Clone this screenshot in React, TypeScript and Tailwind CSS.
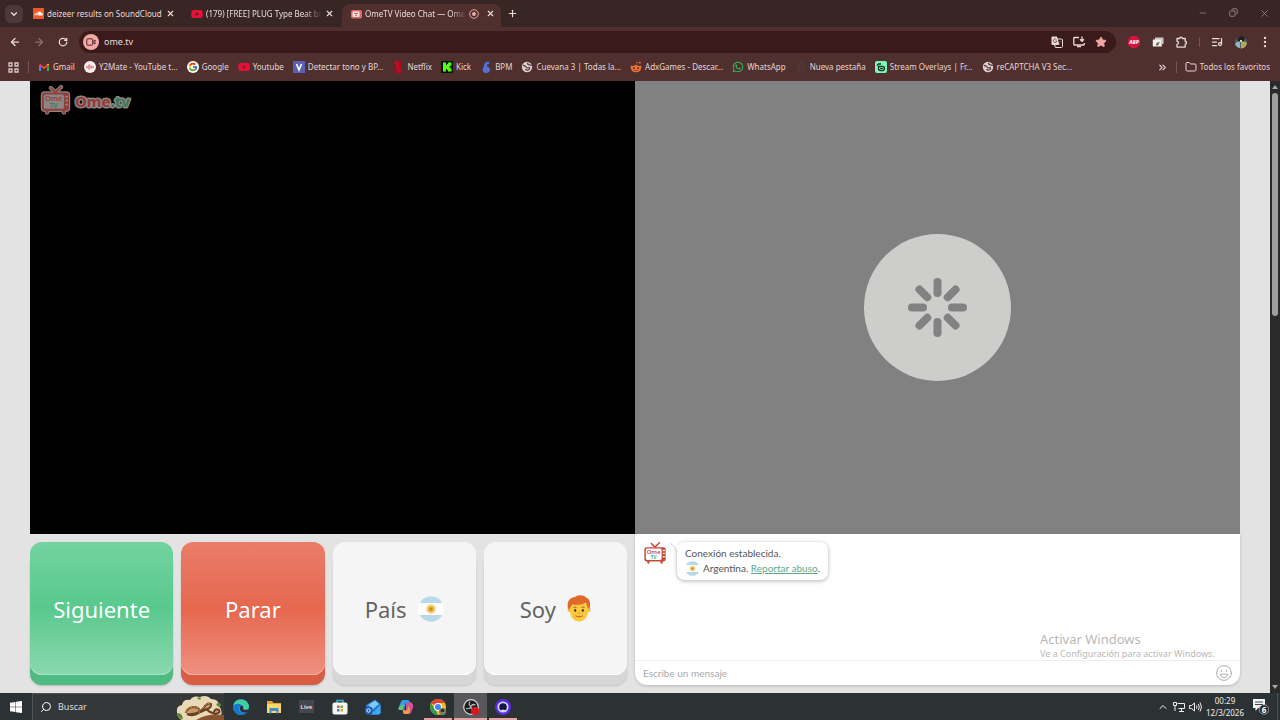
import type { ReactNode } from "react"
import {
  ArrowLeft,
  ArrowRight,
  ChevronDown,
  ChevronsRight,
  ChevronUp,
  Copy,
  EllipsisVertical,
  Folder,
  Globe,
  ListMusic,
  Minus,
  Plus,
  RotateCw,
  Search,
  Star,
  X,
} from "lucide-react"
import { FaRedditAlien, FaSoundcloud, FaWhatsapp, FaYoutube } from "react-icons/fa"
import { FcGoogle } from "react-icons/fc"

function TvIcon({ className, red, green, fill, outline }: { className: string; red: string; green: string; fill: string; outline?: string }) {
  return (
    <svg viewBox="0 0 32 30" className={className} aria-hidden="true">
      {outline && (
        <g stroke={outline} fill={outline} strokeLinecap="round">
          <path d="M11 2l5 5 6-6" fill="none" strokeWidth="4.500" />
          <path d="M7 26v2.200M25 26v2.200" strokeWidth="5" />
          <rect x="1.500" y="7" width="29" height="19.500" rx="3" strokeWidth="2.500" />
        </g>
      )}
      <path d="M11 2l5 5 6-6" fill="none" stroke={red} strokeWidth="2" strokeLinecap="round" />
      <path d="M7 26v2.200M25 26v2.200" stroke={red} strokeWidth="3" strokeLinecap="round" />
      <rect x="1.500" y="7" width="29" height="19.500" rx="3" fill={red} />
      <rect x="3.500" y="9" width="21.500" height="15.500" rx="2" fill={fill} />
      <path d="M27.500 11.500h1M27.500 15.500h1M27.500 20h1" stroke={fill} strokeWidth="2" strokeLinecap="round" />
      <text x="14" y="16.500" textAnchor="middle" fontSize="8" fontFamily="Noto Sans, sans-serif" fontWeight="600" fill={red}>
        Ome
      </text>
      <text x="14" y="23.500" textAnchor="middle" fontSize="7" fontFamily="Noto Sans, sans-serif" fontWeight="700" fill={green}>
        TV
      </text>
    </svg>
  )
}

function OmeLogo() {
  return (
    <div className="absolute left-[10px] top-[5px] flex items-center gap-[2px]">
      <TvIcon className="h-7 w-[31px] overflow-visible" red="#8f3f3a" green="#3f7d66" fill="#8d8583" outline="#8d8583" />
      <svg viewBox="0 0 58 22" className="mt-[2px] h-[22px] w-[58px] overflow-visible" aria-label="Ome.tv">
        <text
          x="2"
          y="17"
          fontSize="15"
          fontFamily="Noto Sans, sans-serif"
          fontWeight="700"
          stroke="#8d8583"
          strokeWidth="3"
          strokeLinejoin="round"
          paintOrder="stroke"
          fill="#963a36"
        >
          Ome<tspan fill="#37795c">.tv</tspan>
        </text>
      </svg>
    </div>
  )
}

function Flag({ className }: { className: string }) {
  return (
    <svg viewBox="0 0 26 26" className={className} aria-hidden="true">
      <circle cx="13" cy="13" r="13" fill="#fdfdfd" />
      <path d="M2.200 6A13 13 0 0 1 23.800 6V7H2.200zM2.200 20A13 13 0 0 0 23.800 20V19H2.200z" fill="#b9d8ea" />
      <circle cx="13" cy="13" r="5" fill="#f3dfa0" />
      <circle cx="13" cy="13" r="3.200" fill="#e9b53a" />
      <circle cx="13" cy="13" r="1.500" fill="#c48a2a" />
    </svg>
  )
}

function Boy() {
  return (
    <svg viewBox="0 0 24 27" className="h-[27px] w-6" aria-hidden="true">
      <circle cx="2.500" cy="15" r="2" fill="#f4b92e" />
      <circle cx="21.500" cy="15" r="2" fill="#f4b92e" />
      <path d="M3 9h18v7c0 6-4 10.500-9 10.500S3 22 3 16z" fill="#fcc83c" />
      <path d="M1 14C-.5 6 3 2.500 8 2c3-2.500 9-2 11 .5 4 1.500 5 6 3.500 11.500l-2-1.500c0-2-1-3.500-2-4.500-4 2-9 2-13 1.500-1.500 1-2 2.500-2.500 4z" fill="#e0692a" />
      <path d="M6.500 12.500q1.500-1 3 0M14.500 12.500q1.500-1 3 0" fill="none" stroke="#b5672a" />
      <ellipse cx="8.200" cy="15.500" rx="1.100" ry="1.400" fill="#4b3a2c" />
      <ellipse cx="15.800" cy="15.500" rx="1.100" ry="1.400" fill="#4b3a2c" />
      <path d="M8.500 21q3.500 2 7 0" fill="none" stroke="#b5672a" strokeLinecap="round" />
      <path d="M11 18h2" stroke="#dd9a2a" strokeLinecap="round" />
    </svg>
  )
}

function Spinner() {
  return (
    <svg viewBox="0 0 147 147" className="size-[147px]" role="img" aria-label="Cargando">
      <circle cx="73.500" cy="73.500" r="73.500" fill="#cdcdcb" />
      {[0, 45, 90, 135, 180, 225, 270, 315].map((angle) => (
        <rect key={angle} x="69.500" y="44" width="8" height="19" rx="4" fill="#828282" transform={`rotate(${angle} 73.5 73.5)`} />
      ))}
    </svg>
  )
}

const youtube = <FaYoutube className="size-3 text-[#e8103a]" />

const tabs: { title: string; icon: ReactNode; faded?: boolean; active?: boolean }[] = [
  {
    title: "deizeer results on SoundCloud",
    icon: (
      <span className="flex size-[11px] items-center justify-center bg-[#f0582a]">
        <FaSoundcloud className="size-[9px] text-white" />
      </span>
    ),
  },
  { title: "(179) [FREE] PLUG Type Beat br", icon: youtube, faded: true },
  {
    title: "OmeTV Video Chat — Ome",
    icon: (
      <svg viewBox="0 0 11 10" className="h-[10px] w-[11px]">
        <rect y="1" width="11" height="8.500" rx="1.500" fill="#e06a62" />
        <rect x="1.500" y="2.500" width="7" height="5.500" rx="1" fill="#f7e4e2" />
        <path d="M3 4.500h4M4 6.300h2" stroke="#c76660" />
      </svg>
    ),
    faded: true,
    active: true,
  },
]

const bookmarks: { title: string; icon: ReactNode }[] = [
  {
    title: "Gmail",
    icon: (
      <svg viewBox="0 0 12 12" className="size-3">
        <path d="M2 10V4" stroke="#4285f4" strokeWidth="2" />
        <path d="M10 10V4" stroke="#34a853" strokeWidth="2" />
        <path d="M1.500 3.500L6 7l4.500-3.500" fill="none" stroke="#ea4335" strokeWidth="2" />
        <path d="M10 4V3" stroke="#fbbc04" strokeWidth="2" />
      </svg>
    ),
  },
  {
    title: "Y2Mate - YouTube t...",
    icon: (
      <svg viewBox="0 0 12 12" className="size-3">
        <circle cx="6" cy="6" r="6" fill="#f8eeee" />
        <path d="M3 5v2M5 3.500v5M7 4.500v3M9 5v2" fill="none" stroke="#c5403e" />
      </svg>
    ),
  },
  { title: "Google", icon: <FcGoogle className="size-3 rounded-full bg-white p-px" /> },
  { title: "Youtube", icon: youtube },
  {
    title: "Detectar tono y BP...",
    icon: (
      <svg viewBox="0 0 12 12" className="size-3">
        <rect width="12" height="12" fill="#5b5fb0" />
        <path d="M3.500 3L6 9l2.500-6" fill="none" stroke="#fff" strokeWidth="1.600" />
      </svg>
    ),
  },
  {
    title: "Netflix",
    icon: (
      <svg viewBox="0 0 12 12" className="size-3">
        <path d="M2.500 0h7v12h-7z" fill="#a50d1b" />
        <path d="M2.500 0h2.500l4.500 12H7z" fill="#c40f20" />
      </svg>
    ),
  },
  {
    title: "Kick",
    icon: (
      <svg viewBox="0 0 12 12" className="size-3">
        <rect width="12" height="12" fill="#0b130b" />
        <path d="M2 1.500h3v2.500h1V3h1V1.500h3.500v3h-1v1h-1v1h1v1h1v3H7V9H6V8H5v2.500H2z" fill="#53fc18" />
      </svg>
    ),
  },
  {
    title: "BPM",
    icon: (
      <svg viewBox="0 0 12 12" className="size-3">
        <path d="M9 .5L5 1.500 3.500 6 2.500 9c0 4 7.500 4 7.500 0 0-2-1.500-3.500-3-3.500L7 3.500l2-.5z" fill="#5470d8" />
      </svg>
    ),
  },
  { title: "Cuevana 3 | Todas la...", icon: <GlobeDot /> },
  { title: "AdxGames - Descar...", icon: <FaRedditAlien className="size-3 text-[#ef7038]" /> },
  { title: "WhatsApp", icon: <FaWhatsapp className="size-3 text-[#2fc05c]" /> },
  { title: "Nueva pestaña", icon: <Globe className="size-[10px] text-[#553a3a]" /> },
  {
    title: "Stream Overlays | Fr...",
    icon: (
      <svg viewBox="0 0 12 12" className="size-3">
        <rect width="12" height="12" rx="2" fill="#80f5b6" />
        <path d="M2 4.500L3.500 3H6M3.500 5.500h4a2 2 0 0 1 0 4h-2a2 2 0 0 1-2-2z" fill="none" stroke="#12392b" strokeWidth="1.300" />
        <path d="M5 7.500h3" stroke="#12392b" />
      </svg>
    ),
  },
  { title: "reCAPTCHA V3 Sec...", icon: <GlobeDot /> },
]

function GlobeDot() {
  return (
    <svg viewBox="0 0 12 12" className="size-3">
      <circle cx="6" cy="6" r="5.200" fill="#dccfce" />
      <path d="M2 4.500q2 0 3 1.500t3 .5q1.500 1-.5 2.200T4.500 8M6.500 1.800q0 2 2 2t2 1.200" fill="none" stroke="#5a4140" strokeWidth="1.300" />
    </svg>
  )
}

function TabStrip() {
  return (
    <header className="flex h-[27px] shrink-0 items-center bg-[#382625] pl-[5px] text-[#eadbd9]">
      <button aria-label="Buscar pestañas" className="flex size-[18px] items-center justify-center rounded-md bg-[#4c3a39]">
        <ChevronDown className="size-[10px]" strokeWidth={3} />
      </button>
      <nav className="flex h-full items-end pl-px">
        {tabs.map((tab) => (
          <div
            key={tab.title}
            className={
              tab.active
                ? "flex h-[23px] w-[159px] items-center gap-[3px] rounded-t-lg bg-[#4f302f] px-2 pb-1"
                : "flex h-[23px] w-[159px] items-center gap-[3px] px-2 pb-1"
            }
          >
            <span className="flex w-3 shrink-0 justify-center">{tab.icon}</span>
            <a
              href="#"
              className={
                tab.faded
                  ? "flex-1 whitespace-nowrap [mask-image:linear-gradient(to_right,black_85%,transparent)]"
                  : "flex-1 whitespace-nowrap"
              }
            >
              {tab.title}
            </a>
            {tab.active && (
              <svg viewBox="0 0 10 10" className="mr-1 size-[10px] shrink-0">
                <circle cx="5" cy="5" r="4.300" fill="none" stroke="#eba9a5" />
                <circle cx="5" cy="5" r="2" fill="#eba9a5" />
              </svg>
            )}
            <button aria-label="Cerrar pestaña" className="shrink-0">
              <X className="size-[9px]" strokeWidth={3} />
            </button>
          </div>
        ))}
      </nav>
      <button aria-label="Nueva pestaña" className="ml-[6px]">
        <Plus className="size-[11px]" strokeWidth={2.5} />
      </button>
      <div className="ml-auto flex text-[#94807f]">
        <button aria-label="Minimizar" className="flex w-[31px] justify-center">
          <Minus className="size-[10px]" />
        </button>
        <button aria-label="Restaurar" className="flex w-[31px] justify-center">
          <Copy className="size-[9px] -scale-x-100" strokeWidth={2.5} />
        </button>
        <button aria-label="Cerrar" className="flex w-[31px] justify-center">
          <X className="size-[11px]" />
        </button>
      </div>
    </header>
  )
}

function Toolbar() {
  return (
    <div className="flex h-[30px] shrink-0 items-center bg-[#4f302f] px-[3px] text-[#eadbd9]">
      <button aria-label="Atrás" className="flex w-6 justify-center">
        <ArrowLeft className="size-3" strokeWidth={2.5} />
      </button>
      <button aria-label="Adelante" className="flex w-6 justify-center text-[#8b706f]">
        <ArrowRight className="size-3" strokeWidth={2.5} />
      </button>
      <button aria-label="Recargar" className="flex w-6 justify-center">
        <RotateCw className="size-[10px]" strokeWidth={3} />
      </button>
      <div className="ml-1 flex h-[22px] flex-1 items-center rounded-full bg-[#3a1a1a] pl-1 pr-[9px]">
        <span className="flex size-4 items-center justify-center rounded-full bg-[#f0a9a5]">
          <svg viewBox="0 0 10 8" className="h-2 w-[10px]" fill="none" stroke="#5b2626">
            <rect x=".8" y=".8" width="5.900" height="6.400" rx=".8" />
            <path d="M7 3.500l2-1.500v4L7 4.500" />
          </svg>
        </span>
        <input aria-label="Dirección" defaultValue="ome.tv" className="min-w-0 flex-1 bg-transparent pl-[5px] text-[9px] outline-none" />
        <button aria-label="Traducir" className="px-[5px]">
          <svg viewBox="0 0 12 12" className="size-3">
            <rect x="4" y="3" width="7.500" height="8.500" rx="1" fill="none" stroke="#eadbd9" />
            <path d="M1.500.5H6L8.500 9h-7Q.5 9 .5 8V1.500Q.5.500 1.500.500z" fill="#eadbd9" />
            <path d="M5.500 3.700A1.800 1.800 0 1 0 5.800 5H4.300M7.500 5.500h3M9 5v.5q0 2-1.500 3" fill="none" stroke="#6a4543" strokeWidth=".8" />
          </svg>
        </button>
        <button aria-label="Instalar" className="px-[5px]">
          <svg viewBox="0 0 12 12" className="size-3" fill="none" stroke="#eadbd9" strokeWidth="1.300">
            <path d="M6 1.500H1.500q-.7 0-.7.700v6q0 .800.700.800h9q.8 0 .8-.8V7M4 10.700h4M9 .5v4.500M7 3.300l2 2 2-2" />
          </svg>
        </button>
        <button aria-label="Favorito" className="pl-[5px] text-[#f2a6a2]">
          <Star className="size-3" fill="currentColor" />
        </button>
      </div>
      <div className="ml-[6px] flex items-center">
        <button aria-label="AdBlock" className="flex w-6 justify-center">
          <svg viewBox="0 0 12 12" className="size-3">
            <path d="M3.500 0h5L12 3.500v5L8.500 12h-5L0 8.500v-5z" fill="#d8123c" />
            <text x="6" y="8" textAnchor="middle" fontSize="5" fontWeight="800" fontStyle="italic" fill="#fff">
              ABP
            </text>
          </svg>
        </button>
        <button aria-label="Capturas" className="flex w-6 justify-center">
          <svg viewBox="0 0 12 12" className="size-3">
            <path d="M3 1.500h8.500V8H10V4H3z" fill="#cfc3c2" />
            <rect x=".8" y="3.500" width="9" height="7" rx=".5" fill="#f5eeee" />
            <path d="M4 9.500c0-3 2-4 4-3-1 .500-1.500 2.500-2 3z" fill="#5d6b5a" />
          </svg>
        </button>
        <button aria-label="Extensiones" className="flex w-6 justify-center">
          <svg viewBox="0 0 12 12" className="size-3" fill="none" stroke="currentColor" strokeWidth="1.300" strokeLinejoin="round">
            <path d="M1 2.500h2.700a1.300 1.300 0 0 1 2.600 0H9.200v3a1.300 1.300 0 0 1 0 2.600v3H1V8.300a1.500 1.500 0 0 0 0-3z" />
          </svg>
        </button>
        <span className="mx-[5px] h-[10px] w-px bg-[#755554]" />
        <button aria-label="Medios" className="flex w-6 justify-center">
          <ListMusic className="size-3" strokeWidth={2.5} />
        </button>
        <button aria-label="Perfil" className="flex w-6 justify-center">
          <svg viewBox="0 0 14 14" className="size-[14px]">
            <circle cx="7" cy="7.500" r="6" fill="#59655a" />
            <path d="M3 4l4-3.500L11 3l-1 3H4z" fill="#1d221d" />
            <path d="M1 9q2-3 5-2v6Q2 12 1 9z" fill="#8fb4cf" />
            <path d="M7 7q4-1 6 1-1 5-6 5.500z" fill="#b3a75b" />
            <path d="M6 5h2v2H6z" fill="#d8cfc6" />
          </svg>
        </button>
        <button aria-label="Menú" className="flex w-6 justify-center">
          <EllipsisVertical className="size-[14px]" strokeWidth={2} />
        </button>
      </div>
    </div>
  )
}

function BookmarksBar() {
  return (
    <nav className="flex h-6 shrink-0 items-center whitespace-nowrap bg-[#4f302f] pb-1 pl-2 pr-[10px] text-[#e5d5d4]">
      <button aria-label="Aplicaciones">
        <svg viewBox="0 0 11 11" className="size-[11px]" fill="none" stroke="#d9c8c7" strokeWidth="1.300">
          <path d="M1 1h3v3H1zM7 1h3v3H7zM1 7h3v3H1zM7 7h3v3H7z" />
        </svg>
      </button>
      <span className="ml-[9px] mr-[9px] h-3 w-px bg-[#755554]" />
      <div className="flex min-w-0 gap-[9px] overflow-hidden">
        {bookmarks.map((item) => (
          <a key={item.title} href="#" className="flex shrink-0 items-center gap-[3px]">
            <span className="flex w-3 justify-center">{item.icon}</span>
            {item.title}
          </a>
        ))}
      </div>
      <button aria-label="Más favoritos" className="ml-auto">
        <ChevronsRight className="size-[11px]" strokeWidth={2.5} />
      </button>
      <span className="mx-2 h-3 w-px bg-[#755554]" />
      <a href="#" className="flex items-center gap-[3px]">
        <Folder className="size-3" />
        Todos los favoritos
      </a>
    </nav>
  )
}

function BigButton({ children, className }: { children: ReactNode; className: string }) {
  return (
    <button className={`mb-[10px] flex min-w-0 items-center justify-center gap-[11px] rounded-xl text-[22px] ${className}`}>
      {children}
    </button>
  )
}

function Chat() {
  return (
    <section className="flex flex-col rounded-b-xl bg-white text-[10px] shadow-[0_1px_3px_rgba(0,0,0,0.2)]">
      <div className="flex flex-1 items-start gap-[10px] px-2 pt-2">
        <TvIcon className="h-[22px] w-6" red="#c64a36" green="#5db088" fill="#ffffff" />
        <div className="relative rounded-lg bg-white px-2 py-1 font-[Lato,sans-serif] leading-[15px] text-[#555] shadow-[0_1px_4px_rgba(0,0,0,0.3)]">
          <svg viewBox="0 0 8 12" className="absolute -left-[7px] top-0 h-3 w-2">
            <path d="M0 1h8v11Q7 5 0 1z" fill="#fff" />
            <path d="M0 1q5 3 7 9" fill="none" stroke="#cfcfcf" />
          </svg>
          <p>Conexión establecida.</p>
          <p className="flex items-center gap-[3px]">
            <Flag className="size-[15px]" />
            <span>
              Argentina.{" "}
              <a href="#" className="text-[#5ea98a] underline">
                Reportar abuso
              </a>
              .
            </span>
          </p>
        </div>
      </div>
      <form className="flex h-[25px] items-center border-t border-[#eee] px-2 font-[Lato,sans-serif]">
        <input
          aria-label="Escribe un mensaje"
          placeholder="Escribe un mensaje"
          className="min-w-0 flex-1 bg-transparent outline-none placeholder:text-[#aaa]"
        />
        <button type="button" aria-label="Emojis">
          <svg viewBox="0 0 16 16" className="size-4" fill="none" stroke="#b0b0b0" strokeLinecap="round">
            <circle cx="8" cy="8" r="7.400" />
            <path d="M4.200 9.500q1 3 3.800 3t3.800-3zM5.500 5.200v1.300M10.500 5.200v1.300" />
          </svg>
        </button>
      </form>
    </section>
  )
}

const apps: { name: string; icon: ReactNode; state?: "running" | "focused" }[] = [
  {
    name: "Edge",
    icon: (
      <svg viewBox="0 0 16 16" className="size-4">
        <circle cx="8" cy="8" r="8" fill="#1e9be0" />
        <path d="M.5 6C2-1 14-1.500 16 7q0 4-5 3.500c-2-.3-1-1.500-1-2.500 0-3-6-4-9.500-2z" fill="#41cf9a" />
        <path d="M.2 7q6-4 8-.500-3 1-2.500 4c.5 3 4 4.500 8 2Q11 16 8 16 .5 15.500.2 7z" fill="#1676cc" />
        <path d="M8.500 6.500q2 0 1.800 2-1 2 2 2.500 2.500 0 3.500-1l-1.500 3q-5 1.500-7-1.500-1.500-3 1.200-5z" fill="#2b2f33" />
      </svg>
    ),
  },
  {
    name: "Explorador",
    icon: (
      <svg viewBox="0 0 16 14" className="h-[14px] w-4">
        <path d="M1 1h5l1.500 2H15v10H1z" fill="#e2a83a" />
        <path d="M1 4h14v9H1z" fill="#fbd668" />
        <path d="M3.500 8h9v5.500h-2V11h-5v2.500h-2z" fill="#3f8fd0" />
      </svg>
    ),
  },
  {
    name: "Ableton Live",
    icon: (
      <svg viewBox="0 0 15 13" className="h-[13px] w-[15px]">
        <rect width="15" height="13" fill="#45454f" />
        <text x="7.500" y="9" textAnchor="middle" fontSize="6" fontWeight="600" fill="#e2e2e2">
          Live
        </text>
      </svg>
    ),
  },
  {
    name: "Store",
    icon: (
      <svg viewBox="0 0 16 16" className="size-4">
        <path d="M5 4V1.500h6V4" fill="none" stroke="#37b6c8" strokeWidth="1.500" />
        <rect x=".5" y="3.500" width="15" height="12" rx="2" fill="#f4f6f1" />
        <path d="M5 6.500h2.500V9H5z" fill="#d8583a" />
        <path d="M8.500 6.500H11V9H8.500z" fill="#7da83a" />
        <path d="M5 10h2.500v2.500H5z" fill="#3d84c8" />
        <path d="M8.500 10H11v2.500H8.500z" fill="#dca52b" />
      </svg>
    ),
  },
  {
    name: "Outlook",
    icon: (
      <svg viewBox="0 0 16 16" className="size-4">
        <path d="M1 6l9-5.500L15.500 5v9q0 1.500-2 1.500H3q-2 0-2-1.500z" fill="#2277d0" />
        <path d="M3 6l7-4.500L14 5 8 10z" fill="#7fc8f5" />
        <path d="M15.500 6v8l-2 1.500H6z" fill="#43a9ef" />
        <rect y="8" width="7" height="7" rx="1" fill="#155bb5" />
        <circle cx="3.500" cy="11.500" r="1.700" fill="none" stroke="#fff" />
      </svg>
    ),
  },
  {
    name: "Copilot",
    icon: (
      <svg viewBox="0 0 16 16" className="size-4">
        <path d="M5 1h5q1 0 1.500 1.500L12 4H8L6 11H2q-2 0-1.500-2L3 2.500Q3.500 1 5 1z" fill="#3399e4" />
        <path d="M3.500 6l2.500-1-1.500 6H2q-2 0-1.500-2z" fill="#62c96a" />
        <path d="M8 4h3l.5-1q2-.5 3.500 2.500.8 1-.2 4L13 13.500Q12.500 15 11 15H7q-1.500 0-2-2l-.5-2H8z" fill="#d1529a" />
        <path d="M5 11.500h4l2-5 1 5-1.500 3.500H7q-1.500 0-2-2z" fill="#f2a03d" />
      </svg>
    ),
  },
  {
    name: "Chrome",
    icon: (
      <svg viewBox="0 0 16 16" className="size-4">
        <circle cx="8" cy="8" r="8" fill="#f3bd28" />
        <path d="M8 8L1.100 4A8 8 0 0 1 15 4H8z" fill="#dc4436" />
        <path d="M8 8l-2 3.500L8 16A8 8 0 0 1 1.100 4L4.500 10z" fill="#2d9c54" />
        <circle cx="8" cy="8" r="4" fill="#fff" />
        <circle cx="8" cy="8" r="3" fill="#4285f4" />
        <circle cx="12.500" cy="12.500" r="3.500" fill="#7d8266" />
        <path d="M10.500 11l2-1.500 2 1.500-.5 2h-3z" fill="#34302a" />
      </svg>
    ),
    state: "running",
  },
  {
    name: "OBS",
    icon: (
      <svg viewBox="0 0 16 16" className="size-4">
        <circle cx="8" cy="8" r="7.300" fill="#1f1f22" stroke="#d8d8d8" strokeWidth="1.200" />
        <path d="M7 2.500q-2 3 1 5M3 9.500q3.500 1 5-2M12.500 6q-3-1.500-4.500 1.500M8 8q0 3 3 4.500" fill="none" stroke="#b8b8b8" strokeWidth="1.200" />
        <circle cx="12" cy="12" r="4" fill="#e0141c" />
      </svg>
    ),
    state: "focused",
  },
  {
    name: "Grabadora",
    icon: (
      <svg viewBox="0 0 16 16" className="size-4">
        <circle cx="8" cy="8" r="8" fill="#5a2be0" />
        <circle cx="8" cy="8" r="4.700" fill="#181540" stroke="#cbd5fa" strokeWidth="1.800" />
        <path d="M5 12q3-3 6 0l-1 1H6z" fill="#cbd5fa" />
      </svg>
    ),
    state: "running",
  },
]

const appStyles = {
  idle: "w-[33px]",
  running: "mx-[2px] w-7 border-b-2 border-[#e5a3a3] pt-[2px]",
  focused: "w-[33px] border-b-2 border-[#e5a3a3] bg-[#565859] pt-[2px]",
}

function Taskbar() {
  return (
    <footer className="flex h-[27px] shrink-0 items-stretch bg-[#2c3233] text-white">
      <button aria-label="Inicio" className="flex w-8 items-center justify-center">
        <svg viewBox="0 0 12 12" className="size-3" fill="#fff">
          <path d="M0 1.700l5.500-.8v4.800H0zM6 .8L12 0v5.700H6zM0 6.300h5.500v4.800L0 10.300zM6 6.300h6V12l-6-.8z" />
        </svg>
      </button>
      <label className="flex w-48 items-center gap-[6px] border-l border-t border-[#505455] bg-[#353839] pl-[7px]">
        <Search className="size-3 -scale-x-100" />
        <input aria-label="Buscar" placeholder="Buscar" className="min-w-0 flex-1 bg-transparent text-[9px] outline-none placeholder:text-[#ddd]" />
        <svg viewBox="0 0 48 25" className="h-[25px] w-12 shrink-0">
          <path d="M1 17q-1-6 5-7 1-6 8-5 3-5 10-3 7-3 11 2 8 0 8 7 4 5 2 9l-3 5H6q-5-2-5-8z" fill="#ead9b6" />
          <path d="M20 25q12-7 28-5v5z" fill="#8a5434" />
          <path d="M10 17q2-5 9-5 6 1 4 6-6 4-12 1 10 1 16-5 4-7 8-5 1 4-6 6-8 4-14 4M30 14q4 4 9 5 6-1 4-4-4-2-5 2" fill="#a8672e" fillOpacity=".55" stroke="#6b4023" strokeWidth="2" strokeLinecap="round" />
          <path d="M10 17q2-5 9-5 6 1 4 6M27 13q4-6 8-4" fill="none" stroke="#d9953f" strokeDasharray="2 1" />
          <path d="M1 18q5-1 6 6-5 0-6-6zM40 9q5-3 5 2-3 2-5-2zM21 3q4-2 4 1-2 2-4-1z" fill="#5c8a34" />
        </svg>
      </label>
      <nav className="flex">
        {apps.map((app) => (
          <button key={app.name} aria-label={app.name} className={`flex items-center justify-center ${appStyles[app.state ?? "idle"]}`}>
            {app.icon}
          </button>
        ))}
      </nav>
      <div className="ml-auto flex items-center gap-1 text-[#eee]">
        <ChevronUp className="size-3" />
        <svg viewBox="0 0 12 12" className="size-3" fill="none" stroke="currentColor">
          <path d="M4.500 2.500h7v5h-6M8.500 7.500v2.500M6 10.500h5M.5 1.500h3v3h-3zM2 4.500v5.500" />
        </svg>
        <svg viewBox="0 0 13 12" className="h-3 w-[13px]" fill="none" stroke="currentColor">
          <path d="M.5 4.500h2L5.500 2v8l-3-2.500h-2zM7.500 4.500q1 1.500 0 3M9.300 3q2 3 0 6M11 1.500q3 4.500 0 9" />
        </svg>
        <time className="text-center leading-3">
          00:29
          <br />
          12/3/2026
        </time>
        <button aria-label="Notificaciones" className="mx-1">
          <svg viewBox="0 0 17 17" className="size-[17px]">
            <path d="M1 1h12v9H6l-2.500 3v-3H1z" fill="#f5f5f5" />
            <path d="M3 4h8M3 6.500h8" stroke="#444" />
            <circle cx="12" cy="11.500" r="4.800" fill="#2c3233" stroke="#aaa" strokeWidth=".8" />
            <text x="12" y="14.500" textAnchor="middle" fontSize="8" fontWeight="700" fill="#fff">
              6
            </text>
          </svg>
        </button>
        <span className="mr-[2px] h-full w-px bg-[#4c5152]" />
      </div>
    </footer>
  )
}

export default function App() {
  return (
    <div className="relative flex h-screen flex-col overflow-hidden bg-[#e3e3e3] font-[Noto_Sans,sans-serif] text-[8px] leading-3">
      <TabStrip />
      <Toolbar />
      <BookmarksBar />
      <div className="flex min-h-0 flex-1">
        <main className="flex flex-1 flex-col px-[30px] pb-2">
          <div className="grid flex-1 grid-cols-2">
            <div className="relative bg-black">
              <OmeLogo />
            </div>
            <div className="flex items-center justify-center bg-[#818181]">
              <Spinner />
            </div>
          </div>
          <div className="grid h-[151px] grid-cols-2">
            <div className="grid grid-cols-4 gap-2 pr-2 pt-2">
              <BigButton className="bg-linear-to-b from-[#72d3a0] via-[#58c98d] to-[#8ad8b0] text-white shadow-[inset_0_-1px_0_#a4e3c2,0_10px_0_#4fba82,0_11px_2px_rgba(0,0,0,0.2)]">
                Siguiente
              </BigButton>
              <BigButton className="bg-linear-to-b from-[#e97d69] via-[#e6674e] to-[#ee9080] text-white shadow-[inset_0_-1px_0_#f5b0a4,0_10px_0_#d95d44,0_11px_2px_rgba(0,0,0,0.2)]">
                Parar
              </BigButton>
              <BigButton className="bg-[#f5f5f5] text-[#636363] shadow-[inset_0_-1px_0_#fff,0_10px_0_#d6d6d6,0_11px_2px_rgba(0,0,0,0.15)]">
                País
                <Flag className="size-[26px]" />
              </BigButton>
              <BigButton className="bg-[#f5f5f5] text-[#636363] shadow-[inset_0_-1px_0_#fff,0_10px_0_#d6d6d6,0_11px_2px_rgba(0,0,0,0.15)]">
                Soy
                <Boy />
              </BigButton>
            </div>
            <Chat />
          </div>
        </main>
        <div className="flex w-[10px] flex-col items-center bg-[#2b2b2b] py-1">
          <svg viewBox="0 0 6 4" className="h-1 w-[6px]" fill="#a5a5a5">
            <path d="M3 0l3 4H0z" />
          </svg>
          <div className="my-1 flex-1">
            <div className="h-[38%] w-[6px] rounded-full bg-[#9f9f9f]" />
          </div>
          <svg viewBox="0 0 6 4" className="h-1 w-[6px]" fill="#a5a5a5">
            <path d="M3 4l3-4H0z" />
          </svg>
        </div>
      </div>
      <Taskbar />
      <div className="pointer-events-none absolute bottom-[60px] right-14 w-[184px] text-[#b8b8b8]">
        <p className="text-[13px] leading-[18px]">Activar Windows</p>
        <p className="text-[9px] leading-3">Ve a Configuración para activar Windows.</p>
      </div>
    </div>
  )
}
